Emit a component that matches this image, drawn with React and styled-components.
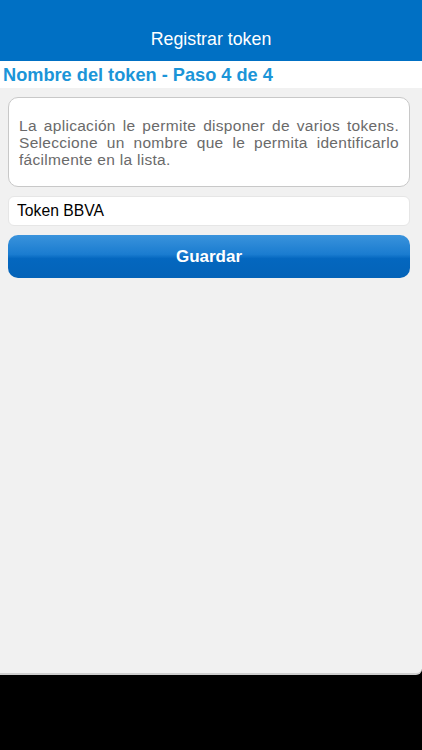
import React from "react"
import styled, { createGlobalStyle } from "styled-components"

const GlobalStyle = createGlobalStyle`
  html, body {
    margin: 0;
    padding: 0;
    background: #000;
  }
  body {
    font-family: "Liberation Sans", Arial, sans-serif;
  }
`

const App = () => {
  return (
    <>
      <GlobalStyle />
      <Screen>
        <Header>
          <Title>Registrar token</Title>
        </Header>
        <StepBar>Nombre del token - Paso 4 de 4</StepBar>
        <Content>
          <InfoBox>
            La aplicación le permite disponer de varios tokens. Seleccione un
            nombre que le permita identificarlo fácilmente en la lista.
          </InfoBox>
          <NameInput defaultValue="Token BBVA" />
          <SaveButton>Guardar</SaveButton>
        </Content>
        <Footer />
      </Screen>
    </>
  )
}

const Screen = styled.div`
  width: 422px;
  height: 750px;
  display: flex;
  flex-direction: column;
  background: #000;
`

const Header = styled.header`
  height: 61px;
  background: #0070c4;
  display: flex;
  align-items: flex-end;
  justify-content: center;
  padding-bottom: 11px;
  box-sizing: border-box;
`

const Title = styled.h1`
  margin: 0;
  color: #fff;
  font-size: 17.8px;
  font-weight: normal;
`

const StepBar = styled.div`
  height: 27px;
  background: #fff;
  color: #1b95d8;
  font-size: 18.2px;
  font-weight: bold;
  padding-left: 3px;
  line-height: 28px;
`

const Content = styled.main`
  flex: 1;
  background: #f1f1f1;
  padding: 9px 12px 0 8px;
  display: flex;
  flex-direction: column;
  gap: 9px;
  border-bottom-right-radius: 6px;
  border-bottom: 2px solid #cfcfcf;
`

const InfoBox = styled.p`
  margin: 0;
  height: 90px;
  box-sizing: border-box;
  background: #fff;
  border: 1px solid #c8c8c8;
  border-radius: 10px;
  padding: 19px 10px 0 10px;
  color: #6a6a6a;
  font-size: 15.5px;
  line-height: 17px;
  text-align: justify;
  letter-spacing: 0.3px;
`

const NameInput = styled.input`
  height: 30px;
  box-sizing: border-box;
  border: 1px solid #e6e6e6;
  border-radius: 6px;
  background: #fff;
  padding: 0 8px;
  font-family: inherit;
  font-size: 15.7px;
  color: #000;
  outline: none;
`

const SaveButton = styled.button`
  height: 43px;
  border: none;
  border-radius: 10px;
  background: linear-gradient(#3a93dc 0%, #1a7cd0 45%, #0467bf 55%, #0463b8 100%);
  color: #fff;
  font-family: inherit;
  font-size: 17px;
  font-weight: bold;
  cursor: pointer;
`

const Footer = styled.div`
  height: 75px;
  background: #000;
`

export default App
